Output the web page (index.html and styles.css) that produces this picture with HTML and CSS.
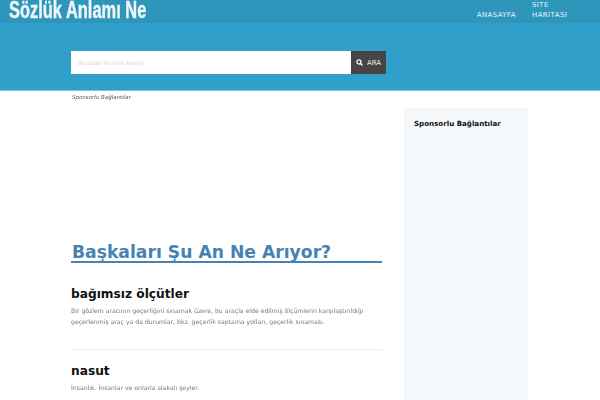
FILE: index.html
```html
<!doctype html>
<html lang="tr">
<head>
  <meta charset="utf-8" />
  <title>Sözlük Anlamı Ne</title>
  <link rel="stylesheet" href="styles.css">
</head>
<body>
  <header class="topbar">
    <a class="logo" href="#">Sözlük Anlamı Ne</a>
    <nav class="nav">
      <a href="#">ANASAYFA</a>
      <a class="nav-wrap" href="#">SITE HARITASI</a>
    </nav>
  </header>

  <section class="hero">
    <form class="search">
      <input type="text" placeholder="Buradan Kelime Arayın" />
      <button type="button">
        <svg width="7" height="7" viewBox="0 0 10 10"><circle cx="4.2" cy="4.2" r="3" fill="none" stroke="#fff" stroke-width="1.8"/><path d="M6.4 6.4 9.2 9.2" stroke="#fff" stroke-width="1.8"/></svg>
        ARA
      </button>
    </form>
  </section>

  <div class="page">
    <main class="content">
      <p class="sponsor">Sponsorlu Bağlantılar</p>
      <div class="ad"></div>
      <h2 class="section-title">Başkaları Şu An Ne Arıyor?</h2>

      <article class="entry">
        <h3>bağımsız ölçütler</h3>
        <p>Bir gözlem aracının geçerliğini sınamak üzere, bu araçla elde edilmiş ölçümlerin karşılaştırıldığı geçerlenmiş araç ya da durumlar, bkz. geçerlik saptama yolları, geçerlik sınaması.</p>
      </article>
      <article class="entry">
        <h3>nasut</h3>
        <p>İnsanlık. İnsanlar ve onlarla alakalı şeyler.</p>
      </article>
    </main>

    <aside class="sidebar">
      <h4>Sponsorlu Bağlantılar</h4>
    </aside>
  </div>
</body>
</html>
```

FILE: styles.css
```css
:root{
  --top:#2e95bb;
  --hero:#30a0cb;
  --link:#4682b4;
}

html,body{ height:400px; overflow:hidden; }
body{
  margin:0;
  background:#fff;
  font-family:"DejaVu Sans",sans-serif;
  color:#111;
}

/* top bar */
.topbar{
  display:flex;
  justify-content:space-between;
  height:23px;
  padding:0 28px 0 9px;
  background:var(--top);
}
.logo{
  font-family:"Liberation Sans",sans-serif;
  font-weight:bold;
  font-size:24px;
  line-height:20px;
  color:#eef6fa;
  text-decoration:none;
  white-space:nowrap;
  -webkit-text-stroke:.4px #eef6fa;
  transform:scaleX(.685);
  transform-origin:left center;
}
.nav{
  display:flex;
  align-items:flex-end;
  gap:16px;
  height:20px;
  font-size:7px;
  line-height:9.5px;
  letter-spacing:.4px;
}
.nav a{ color:#e4f5fb; text-decoration:none; }
.nav-wrap{ width:40px; }

/* search */
.hero{
  height:68px;
  padding-left:71px;
  box-sizing:border-box;
  padding-top:28px;
  background:var(--hero);
  border-bottom:1px solid #7cc5e0;
}
.search{ display:flex; width:315px; height:23px; }
.search input{
  flex:1;
  min-width:0;
  padding:0 7px;
  border:0;
  border-radius:0;
  background:#fff;
  font-family:inherit;
  font-size:5.8px;
}
.search input::placeholder{ color:#e3d3d3; }
.search button{
  display:flex;
  align-items:center;
  justify-content:center;
  gap:4px;
  width:35px;
  padding:0;
  border:0;
  background:#474444;
  color:#f0f0f0;
  font-family:inherit;
  font-size:7px;
}

/* page */
.page{
  display:flex;
  gap:22px;
  padding-left:71px;
}
.content{ width:311px; }
.sponsor{
  margin:2px 0 0 1px;
  font-size:5.5px;
  line-height:9px;
  font-style:italic;
  color:#555;
  filter:grayscale(1);
}
.ad{ height:141px; }
.section-title{
  margin:0;
  padding-left:1px;
  border-bottom:2px solid var(--link);
  font-size:17.2px;
  line-height:18px;
  font-weight:bold;
  color:var(--link);
}
.entry{
  margin-top:24px;
  padding-bottom:22px;
  border-bottom:1px solid #eee;
}
.entry:last-child{ margin-top:14px; border-bottom:0; }
.entry h3{
  margin:0;
  font-size:12.2px;
  line-height:15px;
  font-weight:bold;
  color:#111;
}
.entry p{
  margin:3px 0 0;
  font-size:6.15px;
  line-height:11px;
  color:#777;
  filter:grayscale(1);
}

/* sidebar */
.sidebar{
  width:104px;
  height:291px;
  margin-top:17px;
  padding:9px 10px;
  background:#f5f8fb;
}
.sidebar h4{
  margin:1px 0 0;
  font-size:7.1px;
  line-height:11px;
  font-weight:bold;
  color:#111;
}
```
